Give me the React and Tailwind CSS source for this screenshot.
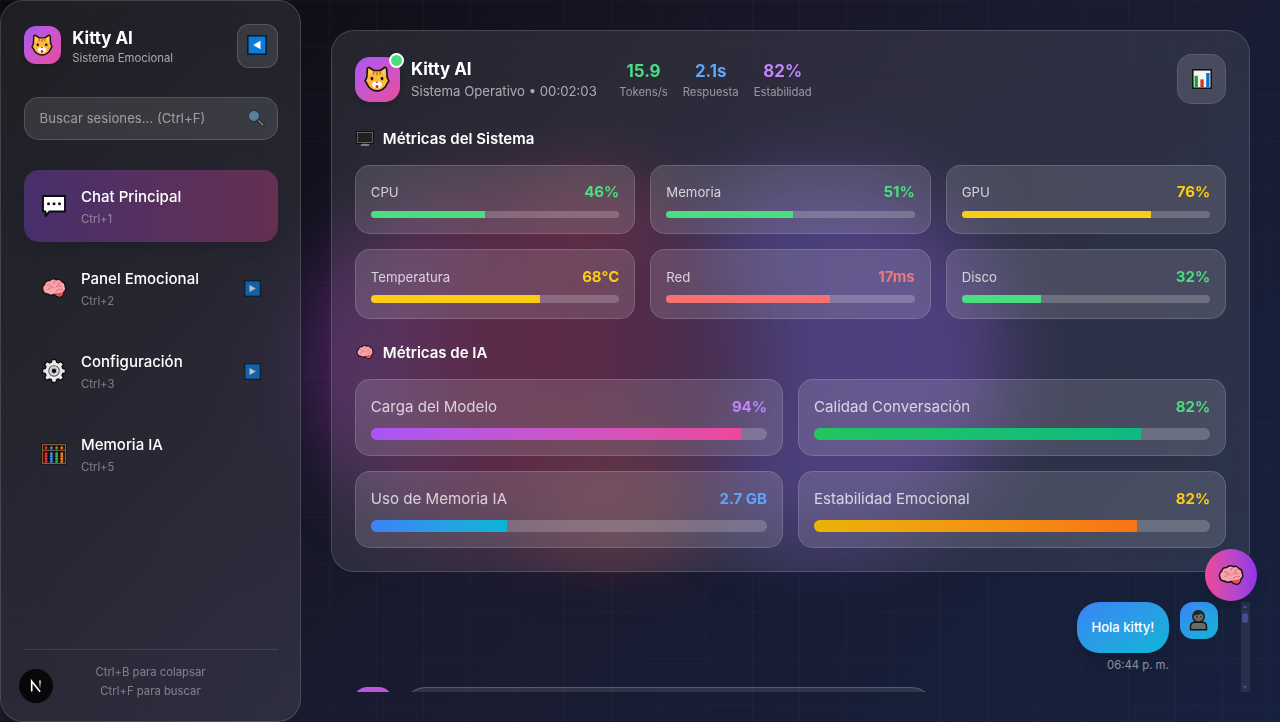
import React from "react";

function CatIcon({ className }) {
  return (
    <svg viewBox="0 0 32 32" className={className}>
      <path d="M4.200 2.600 6 1.600l6.200 4h7.600l6.200-4 1.800 1 .8 11.400 2 4.500-2.300 3.300c-1.500 5-7 8.800-12.300 8.800S5.200 26.800 3.700 21.800L1.400 18.500l2-4.500z" fill="#fdb93a" stroke="#19120f" strokeWidth="2" strokeLinejoin="round" />
      <path d="M6.300 4.800 10.300 7.400 6 11.500zM25.700 4.800 21.700 7.400 26 11.500z" fill="#f3cf8c" />
      <path d="M12 6.500v4M16 6.500v5M20 6.500v4" stroke="#b8641a" strokeWidth="1.500" />
      <ellipse cx="9.800" cy="15.500" rx="1.700" ry="2.200" fill="#1b1b1b" />
      <ellipse cx="22.200" cy="15.500" rx="1.700" ry="2.200" fill="#1b1b1b" />
      <path d="M16 18.500c2.300 0 6 1.300 6 4.300 0 3.400-3.300 4.700-6 4.700s-6-1.300-6-4.700c0-3 3.700-4.300 6-4.300z" fill="#fff" />
      <path d="M14 19h4l-2 2.600z" fill="#d8281c" />
      <circle cx="16" cy="25.300" r="1.900" fill="#e81c2e" />
    </svg>
  );
}

function BrainIcon({ className }) {
  return (
    <svg viewBox="0 0 32 32" className={className}>
      <path d="M2.500 19.500c-1.300-3.500-.6-6.400 1.800-8C5.200 8 8 6.600 10.800 6.800c2-2.500 6-2.700 8.200-1 2.600-1 5.600 0 6.700 2.200 2.800.8 4.300 3 4 5.800 1.300 2.600.6 5.700-1.500 7.200-.2 4-2.600 6.700-6 6.500-3-.2-4.600-2-5.700-3.500-3 1.200-6.800 1.200-8.800-.7-2.500.2-4.700-1.300-5.200-3.800z" fill="#f9a3ae" stroke="#1d1417" strokeWidth="1.900" />
      <path d="M17 22.500c3.500.3 7.500-.5 10.500-2-.3 3-2 5.300-4.800 5.400-2.700 0-4.300-1.300-5.700-3.400z" fill="#e8434f" />
      <path d="M8 12c2-.5 3.500.5 4 2.500 2-.5 3 0 4 1.500M12 14.500c-.5 2-1.500 3-3.500 3.500M18.500 7c-2 .5-3 1.500-2.500 3.500M23 10c-1.500 0-2.500 1-2 3l4 1.500M21 13l-2.500 2M19 20c2-2.500 4.500-3 7.500-2" fill="none" stroke="#dd7482" strokeWidth="1.300" strokeLinecap="round" />
    </svg>
  );
}

function ArrowTile({ className, left }) {
  return (
    <svg viewBox="0 0 20 20" className={className}>
      <rect x="0.800" y="0.800" width="18.400" height="18.400" fill="#0c7bd9" stroke="#081d33" strokeWidth="1.600" />
      <path d={left ? "M13.500 5.800v8.400L6.200 10z" : "M6.500 5.800v8.400l7.300-4.200z"} fill="#fff" />
    </svg>
  );
}

function SearchIcon({ className }) {
  return (
    <svg viewBox="0 0 20 20" className={className}>
      <path d="m11.500 11.500 6 6" stroke="#171b20" strokeWidth="4.200" strokeLinecap="round" />
      <path d="m12 12 5.500 5.500" stroke="#7d8288" strokeWidth="2" strokeLinecap="round" />
      <circle cx="7.700" cy="7.700" r="6.400" fill="#5f8bab" stroke="#26333d" strokeWidth="1.400" />
      <path d="M4 9.500 9.500 4M6 11l5-5" stroke="#86abc6" strokeWidth="1" />
    </svg>
  );
}

function SpeechIcon({ className }) {
  return (
    <svg viewBox="0 0 26 24" className={className}>
      <path d="M2 2h22v15.500H8.500L4.500 22v-4.500H2z" fill="#fff" stroke="#0d0d10" strokeWidth="1.900" strokeLinejoin="round" />
      <g fill="#111">
        <circle cx="7.500" cy="9.700" r="1.500" />
        <circle cx="13" cy="9.700" r="1.500" />
        <circle cx="18.500" cy="9.700" r="1.500" />
      </g>
    </svg>
  );
}

function GearIcon({ className }) {
  return (
    <svg viewBox="0 0 24 26" className={className}>
      <path d="M10 1.500h4l.6 2.700 1.800.8 2.400-1.500 2.700 2.800-1.500 2.300.8 1.900 2.600.5v3.900l-2.600.6-.8 1.800 1.500 2.400-2.700 2.700-2.400-1.500-1.800.8-.6 2.600h-4l-.6-2.600-1.800-.8-2.400 1.500-2.700-2.700L4 17.300l-.8-1.800-2.600-.6V11l2.600-.5L4 8.600 2.500 6.300l2.700-2.800L7.600 5l1.800-.8z" fill="#e9e9ea" stroke="#0e0e10" strokeWidth="1.300" strokeLinejoin="round" />
      <circle cx="12" cy="12.900" r="5.200" fill="none" stroke="#55555a" strokeWidth="1.100" />
      <circle cx="12" cy="12.900" r="3.300" fill="#b9b9bd" />
      <circle cx="12" cy="12.900" r="2.100" fill="#050506" />
    </svg>
  );
}

const abacusColumns = [
  { x: 5, color: "#e62b3a" },
  { x: 10.400, color: "#2d8ee8" },
  { x: 15.600, color: "#2fb344" },
  { x: 20.800, color: "#f07a1c" },
];

function AbacusIcon({ className }) {
  return (
    <svg viewBox="0 0 26 22" className={className}>
      <rect x="0.500" y="0.500" width="25" height="21" fill="#0b0a0b" />
      <rect x="1.600" y="1.600" width="22.800" height="18.800" fill="#131216" stroke="#a1662f" strokeWidth="1" />
      <path d="M2 7.200h22" stroke="#a1662f" strokeWidth="1" />
      {abacusColumns.map((c) => (
        <g key={c.x} fill={c.color}>
          <path d={`M${c.x} 2v18`} stroke="#8b6b4b" strokeWidth="0.500" />
          <rect x={c.x - 1.400} y="3.600" width="2.800" height="2.400" rx="1" />
          {[9.400, 12, 14.600, 17.200].map((y) => (
            <rect key={y} x={c.x - 1.500} y={y} width="3" height="2.500" rx="1" />
          ))}
        </g>
      ))}
    </svg>
  );
}

function MonitorIcon({ className }) {
  return (
    <svg viewBox="0 0 18 16" className={className}>
      <rect x="1" y="1" width="16" height="11" fill="#1f2121" stroke="#0c0c0e" strokeWidth="1.600" />
      <rect x="1.500" y="1.500" width="15" height="10" fill="none" stroke="#77777b" strokeWidth="0.800" />
      <path d="M7 12.500h4v1.500H7z" fill="#4b4b50" />
      <path d="M4.800 14h8.400" stroke="#c9c9cc" strokeWidth="1" />
    </svg>
  );
}

function ChartIcon({ className }) {
  return (
    <svg viewBox="0 0 20 20" className={className}>
      <rect x="0.800" y="0.800" width="18.400" height="18.400" fill="#f4f4f4" stroke="#141416" strokeWidth="1.600" />
      <rect x="2.600" y="6.800" width="3.300" height="11.600" fill="#16a52b" />
      <rect x="8.400" y="10.400" width="3.300" height="8" fill="#d8301f" />
      <rect x="14.200" y="4" width="3.300" height="14.400" fill="#0b6fd0" />
    </svg>
  );
}

function PersonIcon({ className }) {
  return (
    <svg viewBox="0 0 20 24" className={className}>
      <path d="M1.300 22.600v-3.600c0-3 2-4.500 4.500-4.500h8.400c2.500 0 4.500 1.500 4.500 4.500v3.600z" fill="#6a6a6a" stroke="#151515" strokeWidth="1.600" />
      <circle cx="10" cy="8.200" r="6.300" fill="#6a6a6a" stroke="#151515" strokeWidth="1.500" />
      <path d="M3.900 7.200C4 3 7 1.300 10 1.300s6 1.700 6.100 5.900c-1.500-.3-2.500-1-3.300-2.200C11 6.500 7 7 3.900 7.200z" fill="#252525" />
      <circle cx="8.300" cy="8.800" r="0.800" fill="#151515" />
      <circle cx="12.500" cy="8.300" r="0.800" fill="#151515" />
    </svg>
  );
}

function NextBadge() {
  return (
    <div className="absolute bottom-[18px] left-[18px] flex h-[34px] w-[34px] items-center justify-center rounded-full bg-[#08080a] shadow-[0_0_0_1px_#2b2b2e]">
      <svg viewBox="0 0 14 14" className="h-[14px] w-[14px]">
        <defs>
          <linearGradient id="stem" x1="0" y1="0" x2="0" y2="1">
            <stop offset="0" stopColor="#fff" />
            <stop offset="1" stopColor="#fff" stopOpacity="0" />
          </linearGradient>
        </defs>
        <path d="M2.700 12.400V2.200l8.400 10.500" fill="none" stroke="#fff" strokeWidth="1.600" />
        <rect x="10.200" y="1.500" width="1.600" height="8.500" fill="url(#stem)" />
      </svg>
    </div>
  );
}

const navItems = [
  { label: "Chat Principal", keys: "Ctrl+1", Icon: SpeechIcon, iconClass: "h-6 w-[26px]", active: true },
  { label: "Panel Emocional", keys: "Ctrl+2", Icon: BrainIcon, iconClass: "h-[26px] w-[26px]", more: true },
  { label: "Configuración", keys: "Ctrl+3", Icon: GearIcon, iconClass: "h-[26px] w-6", more: true },
  { label: "Memoria IA", keys: "Ctrl+5", Icon: AbacusIcon, iconClass: "h-[22px] w-[26px]" },
];

function Sidebar() {
  return (
    <aside className="relative flex h-full w-[301px] shrink-0 flex-col rounded-[23px] border border-white/15 bg-gradient-to-br from-white/[0.085] to-white/[0.090] px-[22.5px] pt-[22.5px] pb-[20px] backdrop-blur-xl">
      <div className="flex items-center">
        <div className="mb-[1px] flex h-[38px] w-[37.500px] items-center justify-center rounded-[12px] bg-gradient-to-br from-[#a855f7] to-[#ec4899] shadow-md">
          <CatIcon className="h-[22px] w-[22px]" />
        </div>
        <div className="ml-[11.300px] flex-1 pt-[2px]">
          <h1 className="text-[16.900px] leading-[22px] font-bold">Kitty AI</h1>
          <p className="text-[11.300px] leading-[18px] text-white/60">Sistema Emocional</p>
        </div>
        <button className="flex h-[44px] w-[41px] items-center justify-center rounded-[12px] border border-white/15 bg-white/10 pb-[1px]">
          <ArrowTile left className="h-[20px] w-[20px]" />
        </button>
      </div>

      <div className="mt-[29px] flex h-[43px] items-center justify-between rounded-[15px] border border-white/15 bg-white/10 pr-[12px] pl-[15px]">
        <span className="pt-[2px] text-[13.200px] text-white/50">Buscar sesiones... (Ctrl+F)</span>
        <SearchIcon className="h-[18px] w-[18px] opacity-80" />
      </div>

      <nav className="mt-[30px] flex flex-col gap-[10.800px]">
        {navItems.map(({ label, keys, Icon, iconClass, active, more }) => (
          <a
            key={label}
            className={
              active
                ? "flex h-[72px] items-center rounded-[15px] bg-gradient-to-r from-[#472f6c] to-[#652f51] px-[15px] shadow-lg"
                : "flex h-[72px] items-center rounded-[15px] px-[15px]"
            }
          >
            <span className="flex w-[31px] justify-center">
              <Icon className={iconClass} />
            </span>
            <span className="ml-[11.500px] flex-1 pt-[2px]">
              <span className="block text-[15px] leading-[22px] font-medium text-white">{label}</span>
              <span className="mt-[3px] block text-[11.300px] leading-[17px] text-white/40">{keys}</span>
            </span>
            {more && <ArrowTile className="mt-[1px] mr-[2px] h-[17px] w-[17px] opacity-70" />}
          </a>
        ))}
      </nav>

      <div className="mt-auto border-t border-white/10 pt-[13px] text-center text-[11.300px] leading-[18.800px] text-white/40">
        <p>Ctrl+B para colapsar</p>
        <p>Ctrl+F para buscar</p>
      </div>
      <NextBadge />
    </aside>
  );
}

const stats = [
  { value: "15.9", label: "Tokens/s", color: "text-[#4ade80]" },
  { value: "2.1s", label: "Respuesta", color: "text-[#60a5fa]" },
  { value: "82%", label: "Estabilidad", color: "text-[#c084fc]" },
];

const systemMetrics = [
  { label: "CPU", value: "46%", fill: 46, text: "text-[#4ade80]", bar: "bg-[#4ade80]" },
  { label: "Memoria", value: "51%", fill: 51, text: "text-[#4ade80]", bar: "bg-[#4ade80]" },
  { label: "GPU", value: "76%", fill: 76, text: "text-[#facc15]", bar: "bg-[#facc15]" },
  { label: "Temperatura", value: "68°C", fill: 68, text: "text-[#facc15]", bar: "bg-[#facc15]" },
  { label: "Red", value: "17ms", fill: 66, text: "text-[#e87b80]", bar: "bg-[#f87171]" },
  { label: "Disco", value: "32%", fill: 32, text: "text-[#4ade80]", bar: "bg-[#4ade80]" },
];

const aiMetrics = [
  { label: "Carga del Modelo", value: "94%", fill: 93.800, text: "text-[#c084fc]", bar: "bg-gradient-to-r from-[#a855f7] to-[#ec4899]" },
  { label: "Calidad Conversación", value: "82%", fill: 82.500, text: "text-[#4ade80]", bar: "bg-gradient-to-r from-[#22c55e] to-[#10b981]" },
  { label: "Uso de Memoria IA", value: "2.7 GB", fill: 34.400, text: "text-[#60a5fa]", bar: "bg-gradient-to-r from-[#3b82f6] to-[#06b6d4]" },
  { label: "Estabilidad Emocional", value: "82%", fill: 81.500, text: "text-[#facc15]", bar: "bg-gradient-to-r from-[#eab308] to-[#f97316]" },
];

function MetricCard({ metric, large }) {
  return (
    <div className="rounded-[15px] border border-white/15 bg-white/[0.130] p-[15px]">
      <div className="flex h-[22.500px] items-center justify-between leading-[22px]">
        <span className={large ? "pt-[1.500px] text-[15.100px] text-white/75" : "pt-[0.500px] text-[13.200px] text-white/75"}>{metric.label}</span>
        <span className={`${large ? "pt-[1.500px]" : "pt-[0.500px]"} text-[15px] font-bold ${metric.text}`}>{metric.value}</span>
      </div>
      <div className={large ? "mt-[11.250px] h-[11.250px] overflow-hidden rounded-full bg-white/20" : "mt-[7.500px] h-[7.500px] overflow-hidden rounded-full bg-white/20"}>
        <div className={`h-full ${metric.bar}`} style={{ width: `${metric.fill}%` }} />
      </div>
    </div>
  );
}

function StatusPanel() {
  return (
    <section className="shrink-0 rounded-[23px] border border-white/15 bg-white/[0.090] px-[22.800px] pt-[23px] pb-[23px] backdrop-blur-xl">
      <div className="flex h-[50px] items-center">
        <div className="relative flex h-[45px] w-[45px] items-center justify-center rounded-[15px] bg-gradient-to-br from-[#a855f7] to-[#ec4899] shadow-md">
          <CatIcon className="h-[26px] w-[26px]" />
          <span className="absolute -top-[4px] -right-[4px] h-[15px] w-[15px] rounded-full border-2 border-white bg-[#4ade80]" />
        </div>
        <div className="ml-[11.200px] pt-[2px]">
          <h2 className="text-[16.900px] leading-[23px] font-bold">Kitty AI</h2>
          <p className="text-[13.200px] leading-[21px] text-white/60">Sistema Operativo • 00:02:03</p>
        </div>
        <div className="ml-[22.500px] flex gap-[15px] pt-[1px] text-center">
          {stats.map((s) => (
            <div key={s.label}>
              <p className={`text-[16.900px] leading-[24px] font-bold ${s.color}`}>{s.value}</p>
              <p className="text-[11.300px] leading-[18px] text-white/50">{s.label}</p>
            </div>
          ))}
        </div>
        <button className="ml-auto flex h-[50px] w-[49px] items-center justify-center rounded-[15px] border border-white/10 bg-white/[0.130]">
          <ChartIcon className="h-[20px] w-[20px]" />
        </button>
      </div>

      <h3 className="mt-[23px] flex h-[22.500px] items-center text-[15px] font-semibold">
        <MonitorIcon className="mt-[2px] mr-[9px] ml-[1px] h-[16px] w-[18px]" />
        <span className="pt-[1px]">Métricas del Sistema</span>
      </h3>
      <div className="mt-[15px] grid grid-cols-3 gap-[15px]">
        {systemMetrics.map((m) => (
          <MetricCard key={m.label} metric={m} />
        ))}
      </div>

      <h3 className="mt-[22.500px] flex h-[22.500px] items-center text-[15px] font-semibold">
        <BrainIcon className="mr-[9px] ml-[1px] h-[18px] w-[18px]" />
        <span className="pt-[1px]">Métricas de IA</span>
      </h3>
      <div className="mt-[15px] grid grid-cols-2 gap-[15px]">
        {aiMetrics.map((m) => (
          <MetricCard key={m.label} metric={m} large />
        ))}
      </div>
    </section>
  );
}

function Conversation() {
  return (
    <section className="flex min-h-0 flex-1 overflow-hidden">
      <div className="flex-1 px-[23px]">
        <div className="flex h-[85px] items-start justify-end gap-[11.250px]">
          <div className="flex flex-col items-end">
            <div className="flex h-[51.500px] items-center rounded-[22.500px] bg-gradient-to-br from-[#3b82f6] to-[#06b6d4] px-[14.500px] pt-[1px] text-[13.100px] font-medium shadow-lg">
              Hola kitty!
            </div>
            <time className="mt-[3px] text-[11.300px] leading-[18px] text-white/50">06:44 p. m.</time>
          </div>
          <div className="flex h-[37.500px] w-[37.500px] items-center justify-center rounded-[13px] bg-gradient-to-br from-[#3b82f6] to-[#06b6d4]">
            <PersonIcon className="h-[22px] w-[19px]" />
          </div>
        </div>
        <div className="flex items-start gap-[11.250px]">
          <div className="h-[37.500px] w-[37.500px] shrink-0 rounded-[13px] bg-gradient-to-br from-[#a855f7] to-[#ec4899]" />
          <div className="h-[80px] w-[531px] rounded-[22.500px] border border-white/20 bg-white/10" />
        </div>
      </div>
      <div className="flex w-[9.500px] flex-col items-center bg-white/[0.070] py-[3px]">
        <svg viewBox="0 0 6 4" className="h-[3px] w-[6px]"><path d="M0 4 3 0l3 4z" fill="#454f90" /></svg>
        <div className="mt-[5px] h-[10px] w-[6px] rounded-full bg-[#454f90]" />
        <svg viewBox="0 0 6 4" className="mt-auto h-[3px] w-[6px]"><path d="m0 0 3 4 3-4z" fill="#454f90" /></svg>
      </div>
    </section>
  );
}

function Backdrop() {
  return (
    <div className="pointer-events-none absolute inset-0 overflow-hidden">
      <div className="absolute top-[175px] left-[635px] h-[372px] w-[372px] rounded-full bg-gradient-to-r from-[#372e6c] to-[#402c74] blur-[30px]" />
      <div className="absolute top-[190px] left-[308px] h-[340px] w-[450px] rounded-[170px] bg-[linear-gradient(90deg,#48215f_0%,#46204e_20%,#4b1638_34%,#4d1535_62%,#341a3e_88%)] blur-[32px]" />
      <div className="absolute top-[175px] left-[530px] h-[75px] w-[130px] rounded-full bg-[#552036]/70 blur-[26px]" />
      <div className="absolute top-[450px] left-[530px] h-[105px] w-[170px] rounded-full bg-[#552636]/90 blur-[30px]" />
      <div className="absolute inset-0 bg-[linear-gradient(rgba(255,255,255,0.020)_1px,transparent_1px),linear-gradient(90deg,rgba(255,255,255,0.020)_1px,transparent_1px)] bg-[size:47px_47px]" />
    </div>
  );
}

export default function App() {
  return (
    <div className="relative flex h-screen w-full overflow-hidden bg-[linear-gradient(135deg,#0a0a0f_0%,#1a1a2e_50%,#16213e_100%)] font-['Inter',sans-serif] text-white">
      <Backdrop />
      <Sidebar />
      <main className="relative flex min-w-0 flex-1 flex-col gap-[30px] p-[30px]">
        <StatusPanel />
        <Conversation />
      </main>
      <button className="absolute right-[23px] bottom-[121px] flex h-[52px] w-[52px] items-center justify-center rounded-full bg-gradient-to-r from-[#ec4899] to-[#9333ea] shadow-lg">
        <BrainIcon className="h-[26px] w-[26px]" />
      </button>
    </div>
  );
}
